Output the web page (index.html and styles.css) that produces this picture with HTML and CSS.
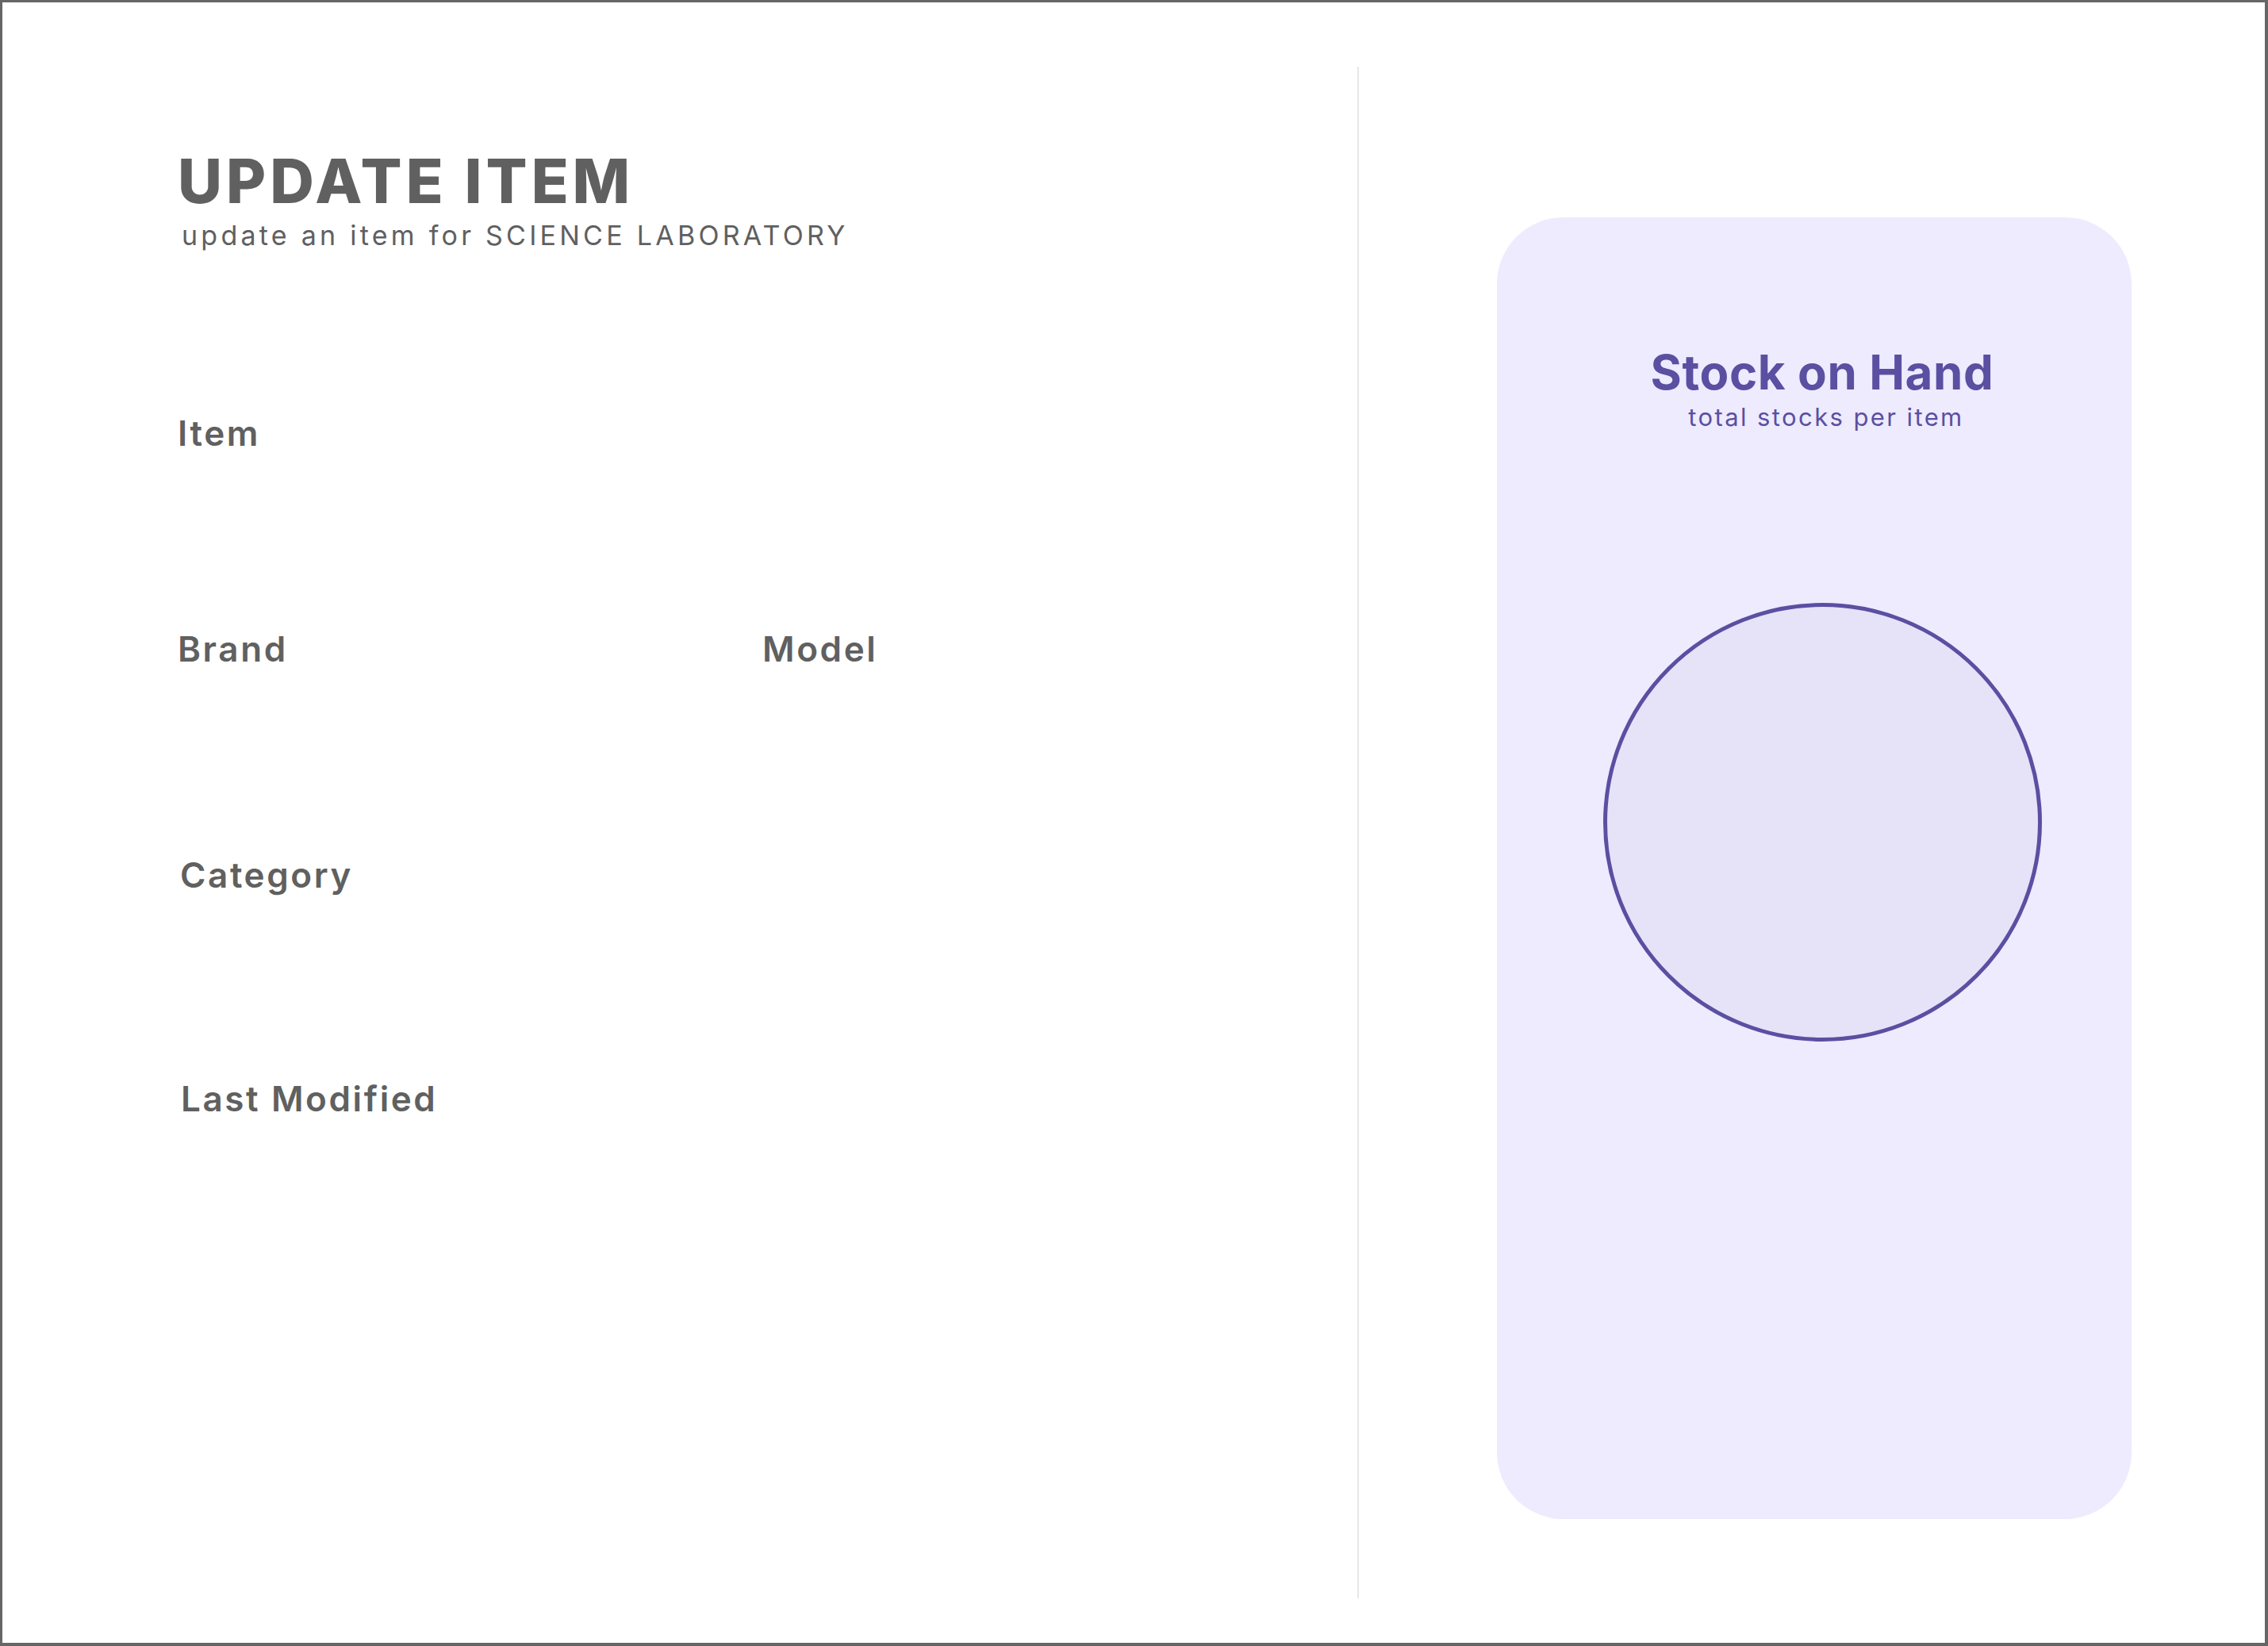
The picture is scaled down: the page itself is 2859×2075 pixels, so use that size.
FILE: index.html
```html
<!DOCTYPE html>
<html lang="en">
<head>
  <meta charset="UTF-8" />
  <meta name="viewport" content="width=device-width, initial-scale=1" />
  <title>Update Item</title>
  <link rel="stylesheet" href="styles.css">
</head>
<body>
  <div class="frame">
    <section class="form-pane">
      <header class="page-head">
        <h1>UPDATE ITEM</h1>
        <p>update an item for SCIENCE LABORATORY</p>
      </header>

      <div class="field field-item">
        <label for="item">Item</label>
      </div>

      <div class="field-row">
        <div class="field field-brand">
          <label for="brand">Brand</label>
        </div>
        <div class="field field-model">
          <label for="model">Model</label>
        </div>
      </div>

      <div class="field field-category">
        <label for="category">Category</label>
      </div>

      <div class="field field-modified">
        <label>Last Modified</label>
      </div>
    </section>

    <div class="divider"></div>

    <aside class="side-pane">
      <div class="stock-card">
        <h2>Stock on Hand</h2>
        <p>total stocks per item</p>
        <div class="stock-ring"></div>
      </div>
    </aside>
  </div>
</body>
</html>
```

FILE: styles.css
```css
:root {
  --text-gray: #606060;
  --purple: #5b4fa2;
  --card-bg: #edebfd;
  --ring-fill: #e6e3f8;
  --line: #e6e6e6;
}
html, body {
  margin: 0;
  height: 100%;
}
body {
  font-family: 'Inter', 'Liberation Sans', sans-serif;
  background: #ffffff;
  color: var(--text-gray);
}
.frame {
  box-sizing: border-box;
  height: 100vh;
  border: 3px solid #666666;
  border-bottom-width: 4px;
  border-right-width: 4px;
  display: flex;
}
.form-pane {
  width: 1708px;
  box-sizing: border-box;
  padding: 187px 0 0 221px;
}
.page-head h1 {
  margin: 0;
  font-size: 77px;
  line-height: 1;
  font-weight: 800;
  letter-spacing: 5px;
}
.page-head p {
  margin: 13px 0 0 5px;
  font-size: 34px;
  line-height: 1;
  letter-spacing: 4.25px;
}
.field label {
  display: block;
  font-size: 44px;
  line-height: 1;
  font-weight: 600;
  letter-spacing: 2.6px;
}
.field-item {
  margin-top: 210px;
  height: 272px;
}
.field-row {
  display: flex;
  height: 285px;
}
.field-brand {
  width: 737px;
}
.field-category {
  height: 282px;
  padding-left: 3px;
}
.field-modified {
  padding-left: 4px;
}
.divider {
  width: 2px;
  background: var(--line);
  margin: 81px 0 56px;
}
.side-pane {
  flex: 1;
  padding: 271px 0 0 174px;
}
.stock-card {
  box-sizing: border-box;
  width: 800px;
  height: 1641px;
  background: var(--card-bg);
  border-radius: 84px;
  padding: 165px 0 0 20px;
  display: flex;
  flex-direction: column;
  align-items: center;
  color: var(--purple);
}
.stock-card h2 {
  margin: 0;
  font-size: 60px;
  line-height: 1;
  font-weight: 700;
  letter-spacing: 0.6px;
}
.stock-card p {
  margin: 11px 0 0 10px;
  font-size: 31px;
  line-height: 1;
  letter-spacing: 2.4px;
}
.stock-ring {
  box-sizing: border-box;
  width: 553px;
  height: 553px;
  margin-top: 219px;
  border-radius: 50%;
  border: 5px solid var(--purple);
  background: var(--ring-fill);
}
```
